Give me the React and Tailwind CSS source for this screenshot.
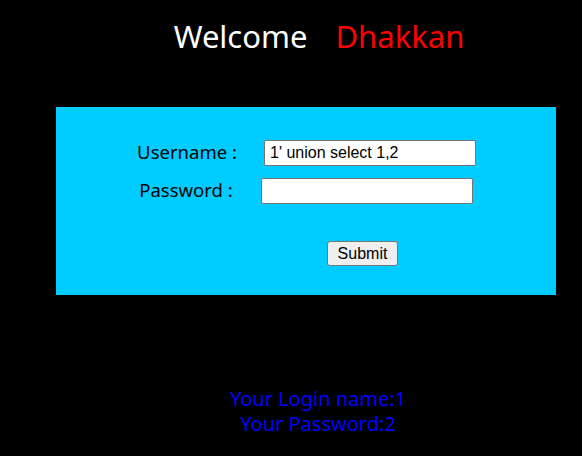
export default function App() {
  const ui = { fontFamily: '"Noto Sans", "Open Sans", sans-serif' };
  const arial = { fontFamily: '"Liberation Sans", Arial, sans-serif' };
  return (
    <div className="w-[582px] h-[456px] bg-black overflow-hidden" style={ui}>
      <div className="pt-[16px] pl-[56px] text-center text-[31px] leading-[40px] text-white">
        Welcome<span className="inline-block w-[28px]"></span>
        <span className="text-[#ff0000]">Dhakkan</span>
      </div>
      <div className="ml-[56px] mt-[51px] w-[500px] h-[188px] bg-[#00ccff] flex flex-col">
        <div className="flex items-center mt-[33px] h-[26px]">
          <div className="ml-[56px] w-[150px] text-center text-[18.5px] leading-[24px] -mt-[3px] text-black">Username :</div>
          <input
            readOnly
            value="1' union select 1,2"
            className="ml-[2px] w-[212px] h-[26px] bg-white border border-[#767676] rounded-[2px] px-[5px] text-[16px] text-black outline-none"
            style={arial}
          />
        </div>
        <div className="flex items-center mt-[12px] h-[26px]">
          <div className="ml-[55px] w-[150px] text-center text-[18.5px] leading-[24px] -mt-[3px] text-black">Password :</div>
          <input
            readOnly
            type="password"
            className="w-[212px] h-[26px] bg-white border border-[#767676] rounded-[2px] px-[5px] text-[16px] outline-none"
            style={arial}
          />
        </div>
        <div className="flex mt-[37px]">
          <button
            className="ml-[271px] w-[71px] h-[25px] bg-[#efefef] border border-[#767676] rounded-[3px] text-[16px] text-black leading-none"
            style={arial}
          >
            Submit
          </button>
        </div>
      </div>
      <div className="mt-[91px] pl-[54px] text-center text-[20px] leading-[25px] text-[#0000ff]">
        <div>Your Login name:1</div>
        <div>Your Password:2</div>
      </div>
    </div>
  );
}
